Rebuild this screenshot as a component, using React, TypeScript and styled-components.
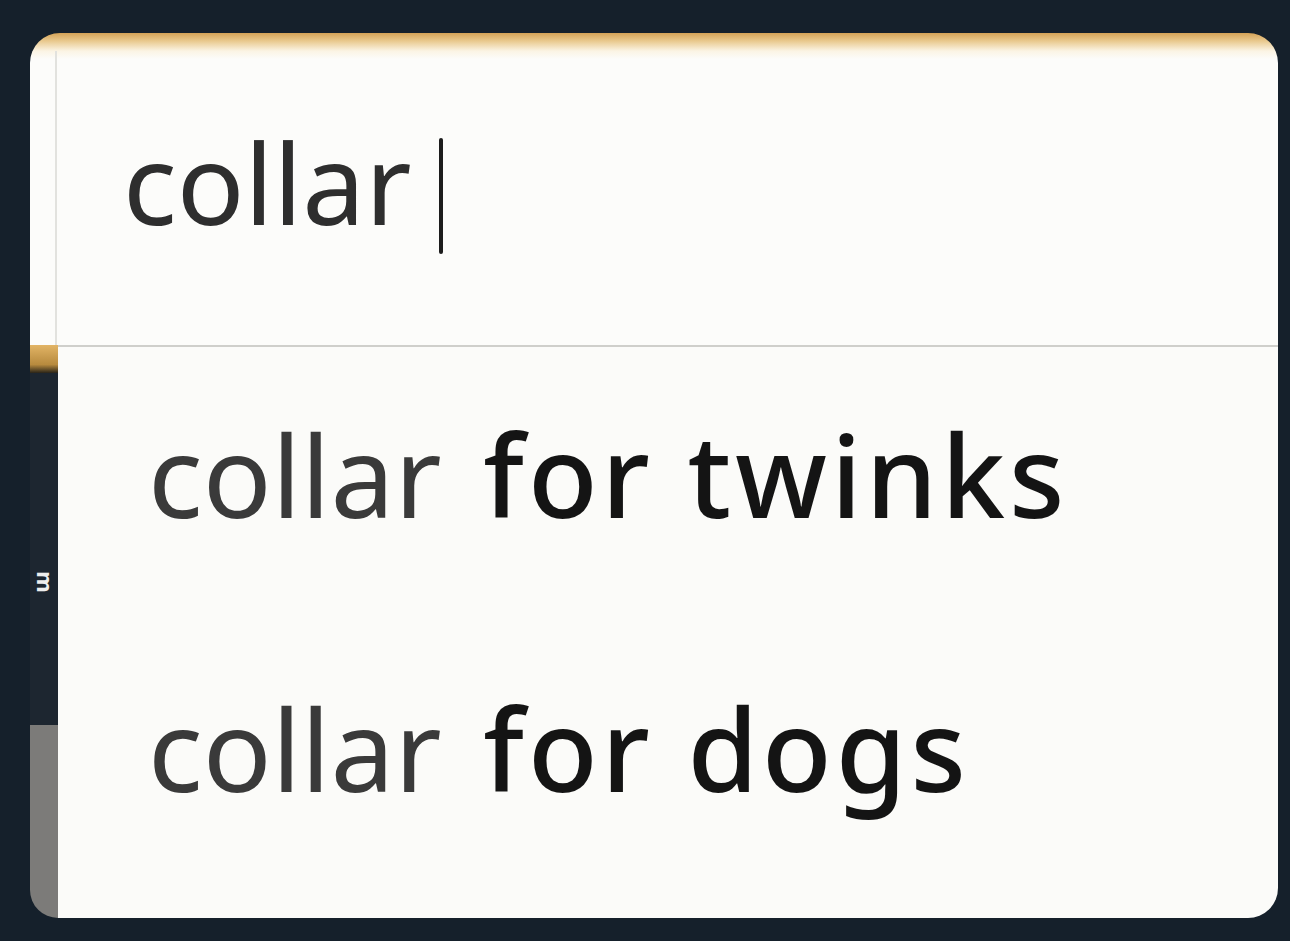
import React from 'react'
import styled, { createGlobalStyle } from 'styled-components'

const GlobalStyle = createGlobalStyle`
    html, body {
        margin: 0;
        padding: 0;
        background: #15202b;
    }
    #root {
        min-height: 941px;
    }
`

const Page = styled.main`
    box-sizing: border-box;
    height: 941px;
    padding: 33px 12px 23px 30px;
    display: flex;
    flex-direction: column;
    font-family: "Noto Sans", "Open Sans", sans-serif;
`

const SearchBox = styled.section`
    height: 312px;
    flex: none;
    box-sizing: border-box;
    display: flex;
    padding-left: 25px;
    border-radius: 30px 30px 0 0;
    background: linear-gradient(180deg, #d4a257 0px, #e9c98e 8px, #fbf4e4 18px, #fcfcfa 26px);
`

const Field = styled.div`
    flex: 1;
    display: flex;
    align-items: flex-start;
    border-left: 2px solid #e2e2de;
    margin-top: 18px;
    padding: 75px 0 0 66px;
`

const Typed = styled.span`
    font-size: 112px;
    line-height: 1;
    color: #2e2e2e;
`

const Caret = styled.span`
    width: 4px;
    height: 116px;
    margin: 12px 0 0 28px;
    background: #1c1c1c;
    border-radius: 2px;
`

const Lower = styled.div`
    flex: 1;
    display: flex;
`

const Strip = styled.aside`
    width: 28px;
    display: flex;
    flex-direction: column;
    overflow: hidden;
    border-radius: 0 0 0 28px;
`

const StripPart = styled.div<{ $h?: number; $bg: string }>`
    ${p => (p.$h ? `height: ${p.$h}px; flex: none;` : 'flex: 1;')}
    background: ${p => p.$bg};
    position: relative;
    overflow: hidden;
`

const StripGlyph = styled.span`
    position: absolute;
    left: 5px;
    top: 198px;
    color: #eeeeee;
    font-size: 22px;
    font-weight: 700;
    line-height: 1;
    transform: rotate(90deg);
`

const Dropdown = styled.ul`
    flex: 1;
    margin: 0;
    list-style: none;
    background: #fbfbf9;
    border-top: 2px solid #cfcfcb;
    border-radius: 0 0 30px 0;
    padding: 70px 0 0 90px;
    display: flex;
    flex-direction: column;
    gap: 160px;
`

const Suggestion = styled.li`
    font-size: 114px;
    line-height: 1;
    color: #3a3a3a;
    white-space: nowrap;
`

const Completion = styled.b`
    margin-left: 12px;
    font-weight: 500;
    letter-spacing: 4px;
    color: #141414;
`

const suggestions = ['for twinks', 'for dogs']

export default function App() {
    const query = 'collar'
    return (
        <>
            <GlobalStyle />
            <Page>
                <SearchBox>
                    <Field>
                        <Typed>{query}</Typed>
                        <Caret />
                    </Field>
                </SearchBox>
                <Lower>
                    <Strip>
                        <StripPart $h={28} $bg="linear-gradient(180deg, #e2b465, #b78a3e 70%, #2a2418)" />
                        <StripPart $h={352} $bg="#1d2630">
                            <StripGlyph>m</StripGlyph>
                        </StripPart>
                        <StripPart $bg="#7c7b79" />
                    </Strip>
                    <Dropdown>
                        {suggestions.map(s => (
                            <Suggestion key={s}>
                                {query} <Completion>{s}</Completion>
                            </Suggestion>
                        ))}
                    </Dropdown>
                </Lower>
            </Page>
        </>
    )
}
